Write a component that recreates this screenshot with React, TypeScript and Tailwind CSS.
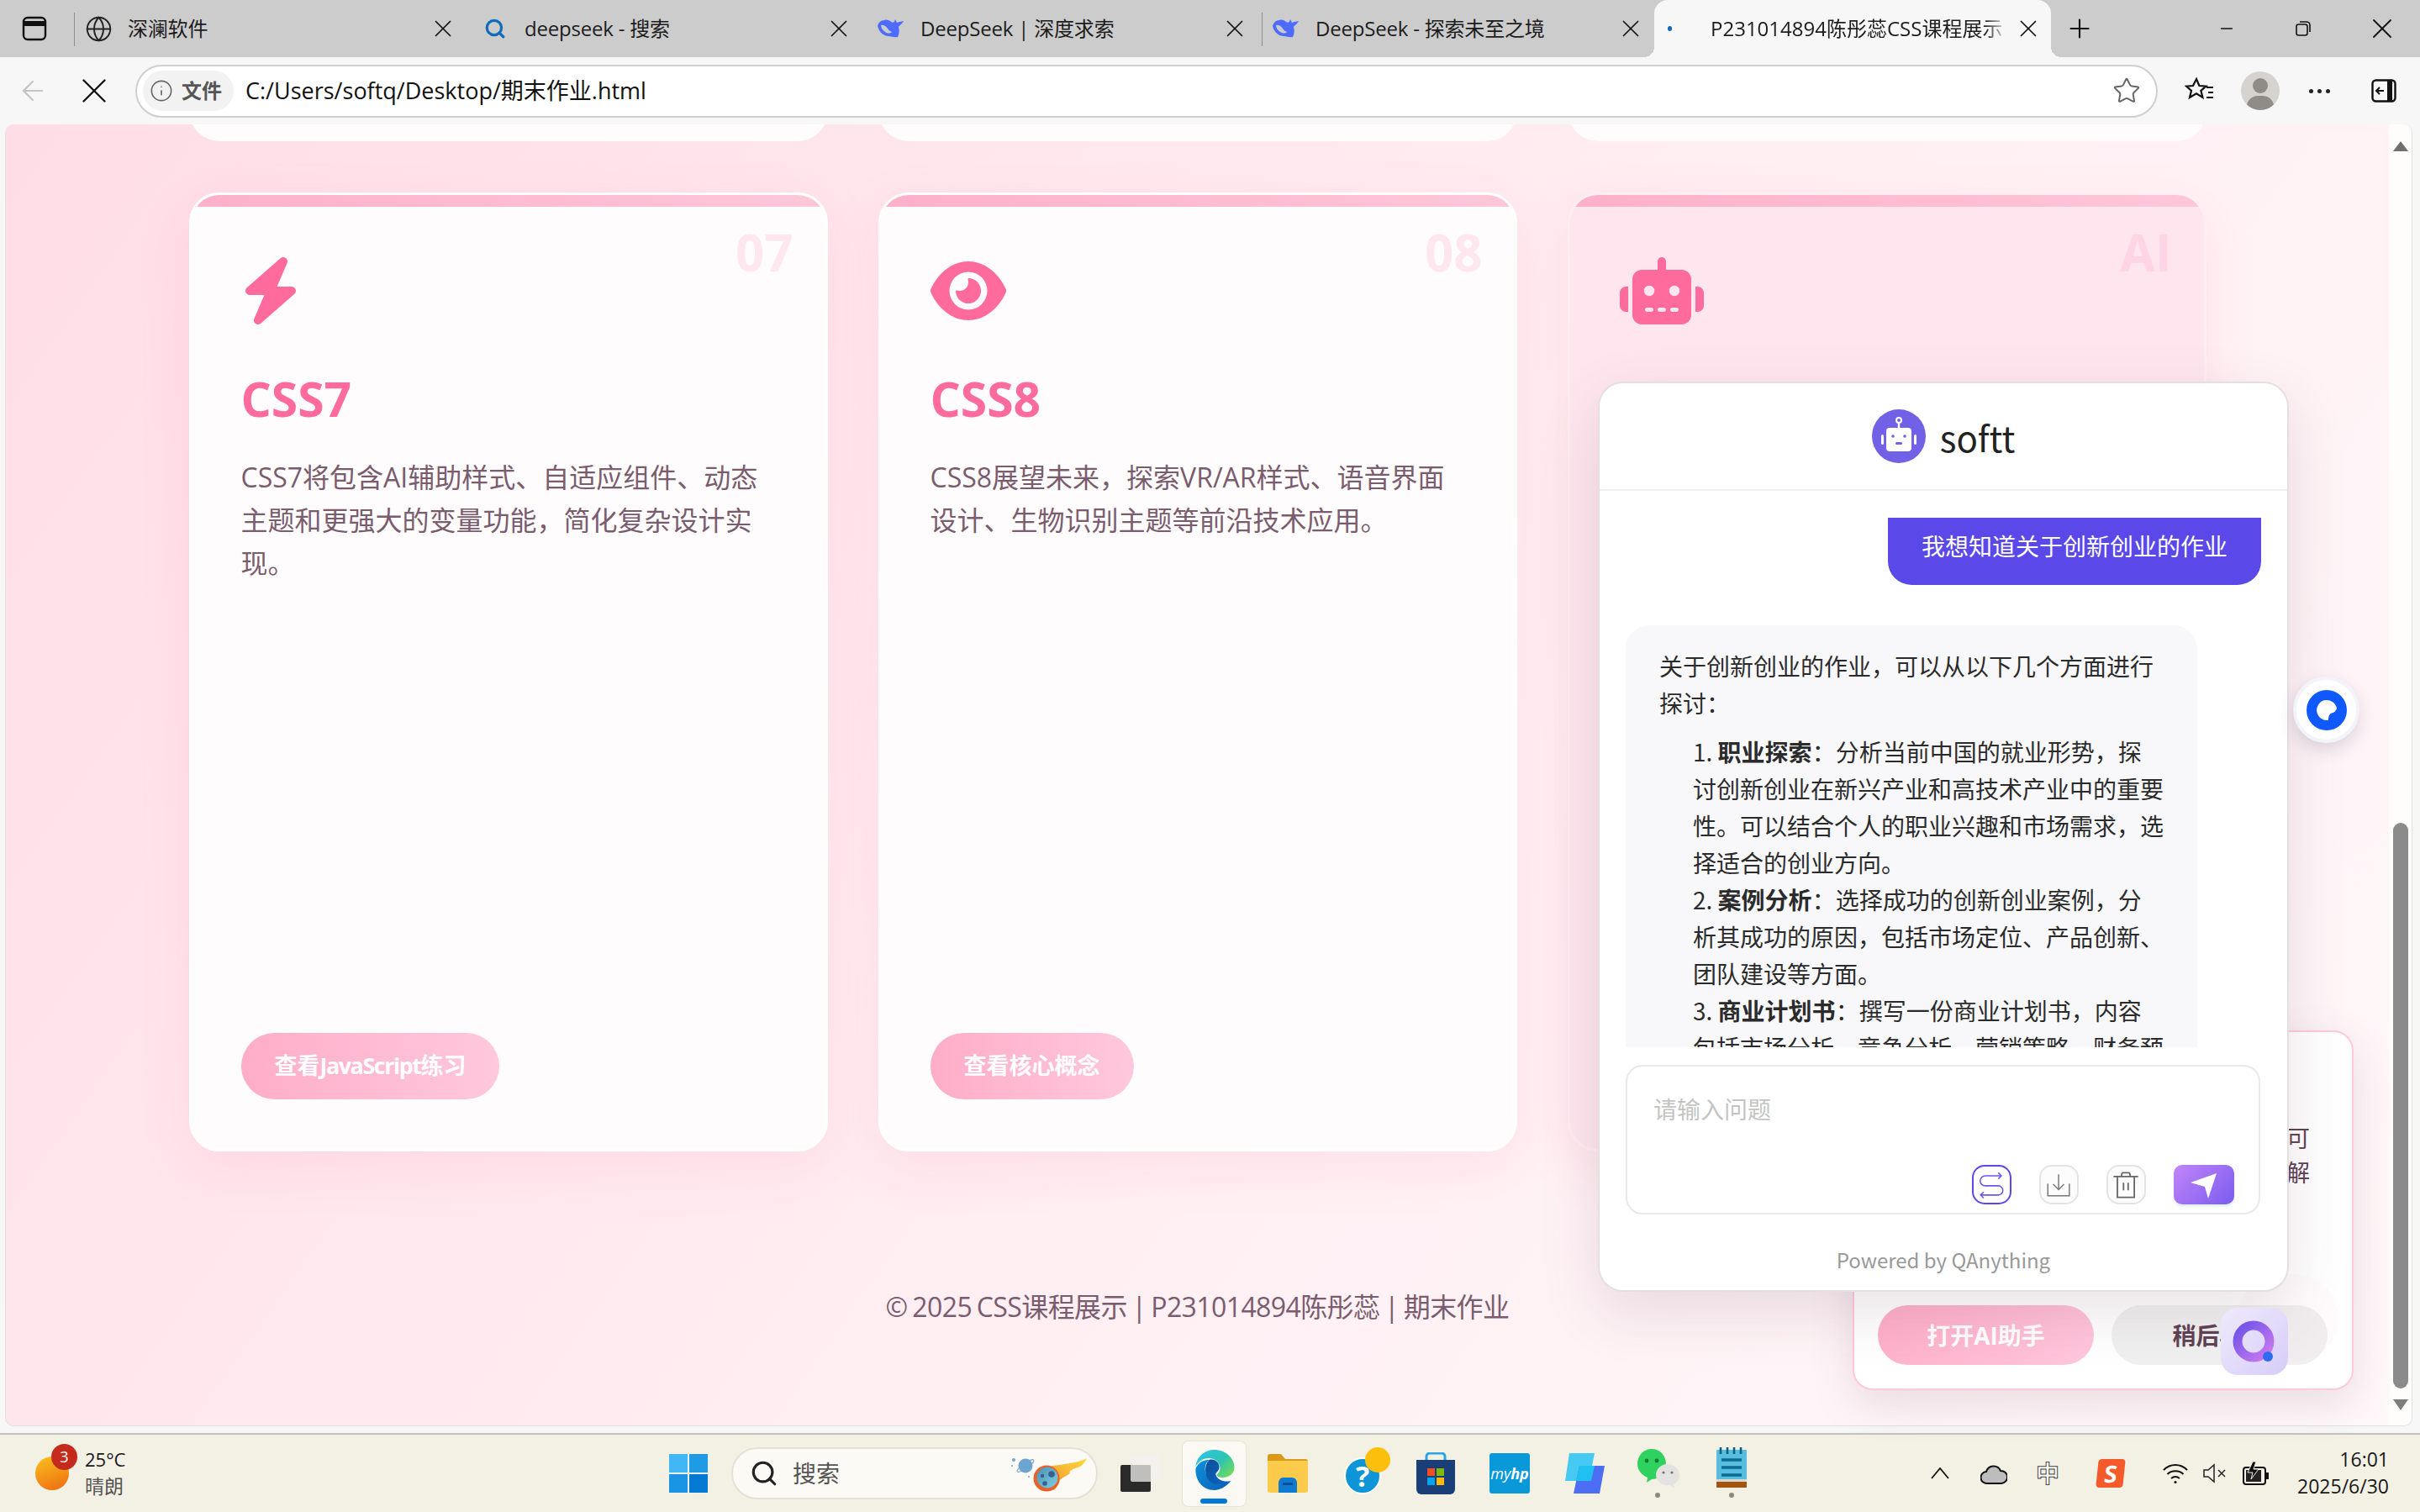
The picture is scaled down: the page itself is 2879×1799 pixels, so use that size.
import { Globe, Search, X, Plus, Minus, ArrowLeft, Star, Info } from "lucide-react";
import { FaBolt, FaEye, FaRobot } from "react-icons/fa6";
import type { ReactNode } from "react";

function Whale() {
  return (
    <svg viewBox="0 0 32 24" className="w-[32px] h-[24px]">
      <path
        fill="#4d6bfe"
        fillRule="evenodd"
        d="M0 9C1 5 4 2 8 2c3-1 6 0 8 2 3 2 4 0 5-3l2 4 3-1 5-1c-2 4-5 5-6 7 1 4 1 8-1 12-4 1-7-1-11-1C8 21 2 17 0 9zM4 8c3-1 6 1 8 4 1 2 3 3 5 4-2 2-5 2-8 0-3-2-5-5-5-8z"
      />
    </svg>
  );
}

function Tab({ icon, title, sep }: { icon: ReactNode; title: string; sep?: boolean }) {
  return (
    <div className={`w-[471px] h-full flex items-center relative ${sep ? "pl-[12px]" : "pl-[13px]"}`}>
      {sep && <span className="absolute left-0 top-[15px] h-[40px] w-px bg-[#8f8f8f]" />}
      <span className="w-[34px] flex justify-center">{icon}</span>
      <span className="ml-[18px] flex-1 text-[24px] text-[#1c1c1c] whitespace-nowrap tracking-[-0.2px]">{title}</span>
      <X className="w-[34px] h-[34px] mr-[15px] text-[#111]" strokeWidth={1.2} />
    </div>
  );
}

function TabBar() {
  return (
    <div className="h-[68px] bg-[#cccccc] flex items-stretch shrink-0">
      <div className="w-[88px] flex items-center pl-[26px]">
        <svg viewBox="0 0 30 30" className="w-[30px] h-[30px]" fill="none" stroke="#111" strokeWidth="2.4">
          <rect x="2" y="2" width="26" height="26" rx="5" />
          <path d="M2 9h26" strokeWidth="6" />
        </svg>
      </div>
      <Tab sep icon={<Globe className="w-[33px] h-[33px] text-[#222]" strokeWidth={1.4} />} title="深澜软件" />
      <Tab icon={<Search className="w-[26px] h-[26px] text-[#0f6cbd]" strokeWidth={3} />} title="deepseek - 搜索" />
      <Tab icon={<Whale />} title="DeepSeek | 深度求索" />
      <Tab sep icon={<Whale />} title="DeepSeek - 探索未至之境" />
      <div className="w-[472px] -ml-[4px] h-full bg-[#f7f7f7] rounded-t-[16px] flex items-center relative">
        <span className="absolute -left-[12px] bottom-0 w-[12px] h-[12px] bg-[radial-gradient(circle_at_0_0,transparent_12px,#f7f7f7_12px)]" />
        <span className="absolute -right-[12px] bottom-0 w-[12px] h-[12px] bg-[radial-gradient(circle_at_100%_0,transparent_12px,#f7f7f7_12px)]" />
        <span className="ml-[16px] w-[5px] h-[6px] rounded-full bg-[#0f6cbd]" />
        <span className="ml-[46px] w-[354px] overflow-hidden text-[24px] text-[#1c1c1c] whitespace-nowrap [mask-image:linear-gradient(90deg,#000_92%,transparent)]">
          P231014894陈彤蕊CSS课程展示 - 期末作业
        </span>
        <X className="w-[34px] h-[34px] ml-[7px] text-[#111]" strokeWidth={1.2} />
      </div>
      <div className="flex items-center ml-[16px]">
        <Plus className="w-[36px] h-[36px] text-[#111]" strokeWidth={1.4} />
        <Minus className="ml-[146px] w-[22px] h-[22px] text-[#111]" strokeWidth={1.6} />
        <svg viewBox="0 0 20 20" className="ml-[70px] w-[20px] h-[20px]" fill="none" stroke="#111" strokeWidth="1.6">
          <rect x="2" y="5" width="13" height="13" rx="2.5" />
          <path d="M6 2h8a4 4 0 0 1 4 4v8" />
        </svg>
        <X className="ml-[64px] w-[40px] h-[40px] text-[#111]" strokeWidth={1.1} />
      </div>
    </div>
  );
}

function Toolbar() {
  return (
    <div className="h-[80px] bg-[#f7f7f7] flex items-center shrink-0">
      <ArrowLeft className="ml-[20px] w-[38px] h-[38px] text-[#c4c4c4]" strokeWidth={1.4} />
      <X className="ml-[29px] w-[50px] h-[50px] text-[#111]" strokeWidth={1.1} />
      <div className="ml-[24px] w-[2406px] h-[63px] rounded-full border-2 border-[#cfcfcf] bg-white flex items-center pl-[7px]">
        <div className="h-[48px] w-[108px] rounded-full bg-[#f2f2f2] flex items-center pl-[8px] gap-[10px]">
          <Info className="w-[28px] h-[28px] text-[#666]" strokeWidth={1.4} />
          <span className="text-[24px] font-bold text-[#555]">文件</span>
        </div>
        <span className="ml-[14px] text-[27px] text-[#111] whitespace-nowrap">C:/Users/softq/Desktop/期末作业.html</span>
        <Star className="ml-auto mr-[18px] w-[34px] h-[34px] text-[#666]" strokeWidth={1.4} />
      </div>
      <svg viewBox="0 0 36 36" className="ml-[32px] w-[36px] h-[36px]" fill="none" stroke="#111" strokeWidth="2.2">
        <path d="M14 4l3.4 8 8 .6-6 5.2 2 8.2-7.4-4.600L6 26l2-8.200-6-5.200 8-.6z" />
        <path d="M26 14h8M28 20h6M26 26h8" />
      </svg>
      <div className="ml-[31px] w-[46px] h-[46px] rounded-full bg-[#d4d3cf] relative overflow-hidden">
        <span className="absolute left-[14px] top-[8px] w-[18px] h-[18px] rounded-full bg-[#8f8c88]" />
        <span className="absolute left-[7px] top-[29px] w-[32px] h-[26px] rounded-full bg-[#8f8c88]" />
      </div>
      <div className="ml-[35px] flex gap-[5px]">
        <span className="w-[5px] h-[5px] rounded-full bg-[#222]" />
        <span className="w-[5px] h-[5px] rounded-full bg-[#222]" />
        <span className="w-[5px] h-[5px] rounded-full bg-[#222]" />
      </div>
      <svg viewBox="0 0 30 28" className="ml-[49px] w-[30px] h-[28px]" fill="none" stroke="#111" strokeWidth="2.4">
        <rect x="1.500" y="1.500" width="27" height="25" rx="4" />
        <path d="M22 1.500v25" strokeWidth="6" />
        <path d="M15 14H7M10 10l-4 4 4 4" strokeWidth="2" />
      </svg>
    </div>
  );
}

function Card({ no, icon, title, desc, action, tint }: { no: string; icon: ReactNode; title: string; desc: string; action: ReactNode; tint?: boolean }) {
  return (
    <div
      className={`relative h-[1141px] rounded-[36px] border-[3px] pt-[74px] pl-[59px] pr-[60px] pb-[59px] flex flex-col overflow-hidden shadow-[0_20px_60px_rgba(255,130,170,0.14)] ${
        tint ? "bg-[#ffe6ee] border-[#ffeef3]" : "bg-[#fffcfd] border-white"
      }`}
    >
      <div className="absolute inset-x-0 top-0 h-[14px] bg-[linear-gradient(90deg,#ffb0cb,#ffc6da)]" />
      <span className={`absolute right-[38px] top-[28px] text-[60px] leading-[80px] font-bold ${tint ? "text-[#ffd4e4]" : "text-[#ffe6ef]"}`}>{no}</span>
      <div className="h-[80px] text-[#ff6b9d]">{icon}</div>
      <h3 className={`text-[57px] leading-[72px] font-bold text-[#ff6b9d] ${tint ? "mt-[59px]" : "mt-[52px]"}`}>{title}</h3>
      <p className="mt-[32px] text-[32px] leading-[51px] text-[#7a5c6e]">{desc}</p>
      <button className="mt-auto self-start h-[79px] px-[40px] rounded-full bg-[linear-gradient(90deg,#ffadc8,#ffc8dd)] text-[27px] font-bold text-white whitespace-nowrap">
        {action}
      </button>
    </div>
  );
}

function Scrollbar() {
  return (
    <div className="w-[27px] bg-[#fffcfc] flex flex-col items-center shrink-0">
      <span className="mt-[20px] w-0 h-0 border-x-[9px] border-x-transparent border-b-[12px] border-b-[#6f6f6f]" />
      <div className="mt-[799px] w-[18px] h-[673px] rounded-full bg-[#8b8b8b]" />
      <span className="mt-[13px] w-0 h-0 border-x-[9px] border-x-transparent border-t-[13px] border-t-[#7d7d7d]" />
    </div>
  );
}

function TopRowCard() {
  return (
    <div className="h-[20px] overflow-hidden">
      <div className="h-[60px] -mt-[40px] bg-[#fffcfd] rounded-b-[36px]" />
    </div>
  );
}

function Page() {
  return (
    <div className="flex-1 min-h-0 bg-[#f7f7f7] pl-[6px] pr-[9px] pb-[8px]">
      <div className="h-full flex rounded-[10px] overflow-hidden border border-[#e4dfe1] border-t-0">
        <div className="flex-1 min-w-0 bg-[linear-gradient(125deg,#ffdde6_0%,#ffe7ed_32%,#fff0f4_60%,#fff8fa_100%)]">
          <div className="w-[2400px] mx-auto">
            <div className="grid grid-cols-3 gap-[60px]">
              <TopRowCard />
              <TopRowCard />
              <TopRowCard />
            </div>
            <div className="mt-[61px] grid grid-cols-3 gap-[60px]">
              <Card
                no="07"
                icon={<FaBolt className="w-[70px] h-[80px]" />}
                title="CSS7"
                desc="CSS7将包含AI辅助样式、自适应组件、动态主题和更强大的变量功能，简化复杂设计实现。"
                action={
                  <>
                    查看<span className="tracking-[-1.5px]">JavaScript</span>练习
                  </>
                }
              />
              <Card
                no="08"
                icon={<FaEye className="w-[90px] h-[80px]" />}
                title="CSS8"
                desc="CSS8展望未来，探索VR/AR样式、语音界面设计、生物识别主题等前沿技术应用。"
                action="查看核心概念"
              />
              <Card tint no="AI" icon={<FaRobot className="w-[100px] h-[80px]" />} title="AI助手" desc="" action="打开AI助手" />
            </div>
            <p className="mt-[160px] text-center text-[32px] leading-[50px] text-[#7a5c6e] tracking-[-0.6px] [word-spacing:-2px]">
              © 2025 CSS课程展示 | P231014894陈彤蕊 | 期末作业
            </p>
          </div>
        </div>
        <Scrollbar />
      </div>
    </div>
  );
}

function BotAvatar() {
  return (
    <svg viewBox="0 0 64 64" className="w-[64px] h-[64px]">
      <circle cx="32" cy="32" r="32" fill="#7161e6" />
      <rect x="17" y="22" width="30" height="28" rx="4" fill="#fff" />
      <rect x="11" y="30" width="3" height="12" rx="1.500" fill="#fff" />
      <rect x="50" y="30" width="3" height="12" rx="1.500" fill="#fff" />
      <path d="M32 22v-6" stroke="#fff" strokeWidth="2.4" />
      <circle cx="32" cy="13" r="3" fill="none" stroke="#fff" strokeWidth="2" />
      <circle cx="25" cy="32" r="1.800" fill="#7161e6" />
      <circle cx="39" cy="32" r="1.800" fill="#7161e6" />
      <rect x="28" y="39" width="8" height="3" rx="1.500" fill="#7161e6" />
    </svg>
  );
}

function ChatPanel() {
  return (
    <div className="absolute left-[1901px] top-[454px] w-[822px] h-[1083px] rounded-[30px] border-2 border-[#e6dfe2] bg-white flex flex-col font-['Noto_Sans_CJK_SC',sans-serif] shadow-[0_24px_70px_rgba(90,60,80,0.14)]">
      <div className="h-[128px] shrink-0 border-b-2 border-[#eeeeee] flex items-center justify-center gap-[17px]">
        <BotAvatar />
        <span className="text-[42px] text-[#222]">softt</span>
      </div>
      <div className="h-[662px] shrink-0 overflow-hidden pl-[31px] pr-[31px] pt-[32px]">
        <div className="flex justify-end">
          <div className="w-[444px] h-[80px] rounded-b-[28px] bg-[#5b48e8] text-white text-[28px] leading-[44px] px-[40px] pt-[11px] whitespace-nowrap">
            我想知道关于创新创业的作业
          </div>
        </div>
        <div className="mt-[48px] w-[680px] rounded-t-[28px] bg-[#f8f8fb] px-[40px] pt-[26px] pb-[30px] text-[28px] leading-[44px] text-[#2b2b2b]">
          <p>关于创新创业的作业，可以从以下几个方面进行探讨：</p>
          <ol className="mt-[14px] pl-[40px] list-decimal list-inside">
            <li>
              <b>职业探索</b>：分析当前中国的就业形势，探讨创新创业在新兴产业和高技术产业中的重要性。可以结合个人的职业兴趣和市场需求，选择适合的创业方向。
            </li>
            <li>
              <b>案例分析</b>：选择成功的创新创业案例，分析其成功的原因，包括市场定位、产品创新、团队建设等方面。
            </li>
            <li>
              <b>商业计划书</b>：撰写一份商业计划书，内容包括市场分析、竞争分析、营销策略、财务预测等方面。
            </li>
          </ol>
        </div>
      </div>
      <div className="ml-[31px] mt-[21px] w-[755px] h-[178px] shrink-0 rounded-[20px] border-2 border-[#e9e9ec] flex flex-col">
        <textarea
          placeholder="请输入问题"
          className="flex-1 resize-none outline-none bg-transparent pl-[31px] pt-[28px] text-[28px] leading-[44px] placeholder:text-[#c4c4c4]"
        />
        <div className="flex justify-end gap-[33px] pr-[29px] pb-[10px]">
          <button className="w-[47px] h-[47px] rounded-[15px] border-2 border-[#5b48e8] overflow-hidden">
            <svg viewBox="0 0 47 47" className="w-full h-full" fill="none" stroke="#6a58e8" strokeWidth="1.700">
              <path d="M36 12H15a6.500 6.500 0 0 0 0 13h17a6 6 0 0 1 0 12H9" />
              <path d="M32 8l4 4-4 4M13 33l-4 4 4 4" />
            </svg>
          </button>
          <button className="w-[47px] h-[47px] rounded-[15px] border-2 border-[#e4e4e4] bg-[#fcfcfc] overflow-hidden">
            <svg viewBox="0 0 47 47" className="w-full h-full" fill="none" stroke="#777" strokeWidth="1.600">
              <path d="M9 22v16h28V22M23 10v20M16 23l7 7 7-7" />
            </svg>
          </button>
          <button className="w-[47px] h-[47px] rounded-[15px] border-2 border-[#e4e4e4] bg-[#fcfcfc] overflow-hidden">
            <svg viewBox="0 0 47 47" className="w-full h-full" fill="none" stroke="#666" strokeWidth="2">
              <path d="M7 13h32M12 13v27h22V13M17 13l1-4a1 1 0 0 1 1-1h8a1 1 0 0 1 1 1l1 4M20 21v10M26 21v10" />
            </svg>
          </button>
          <button className="w-[72px] h-[47px] rounded-[10px] bg-[linear-gradient(135deg,#c285f8,#7a5cf0)] shadow-[0_3px_0_#e6f4fd]">
            <svg viewBox="0 0 72 47" className="w-full h-full">
              <polygon fill="#fff" points="20,21 51,10 41,40 37,26" />
            </svg>
          </button>
        </div>
      </div>
      <p className="mt-[36px] text-center text-[24px] leading-[36px] text-[#999]">Powered by QAnything</p>
    </div>
  );
}

function Reminder() {
  return (
    <>
      <div className="absolute left-[2204px] top-[1226px] w-[596px] h-[428px] rounded-[24px] border-2 border-[#ffc8dd] bg-white shadow-[0_16px_50px_rgba(120,80,100,0.16)] flex flex-col">
        <p className="mt-[106px] mr-[50px] text-right text-[28px] leading-[41px] text-[#5f4254]">
          可
          <br />解
        </p>
        <div className="mt-[137px] px-[28px] flex gap-[21px]">
          <button className="w-[257px] h-[71px] rounded-full bg-[linear-gradient(135deg,#ffadc8,#ffc8dd)] text-[28px] font-bold text-white">
            打开AI助手
          </button>
          <button className="w-[257px] h-[71px] rounded-full bg-[#f0f0f0] text-[28px] font-bold text-[#5f4254]">稍后再说</button>
        </div>
      </div>
      <div className="absolute left-[2662px] top-[1516px] w-[120px] h-[104px] rounded-full bg-[#ffdbe6]/10" />
    </>
  );
}

function FloatBadges() {
  return (
    <>
      <div className="absolute left-[2728px] top-[805px] w-[79px] h-[79px] rounded-full bg-white border-[4px] border-[#f2f3fb] shadow-[0_8px_20px_rgba(60,60,90,0.18)] flex items-center justify-center">
        <svg viewBox="0 0 48 48" className="w-[48px] h-[48px]">
          <circle cx="24" cy="24" r="24" fill="#1058ff" />
          <path fill="#fff" d="M36 22A12 12 0 1 0 26 35.800C26 30 28 28 30 27.500 33 27 35 25 36 22z" />
        </svg>
      </div>
      <div className="absolute left-[2642px] top-[1556px] w-[80px] h-[80px] rounded-[20px] bg-[linear-gradient(135deg,#efeafc,#d6cdf8)] flex items-center justify-center">
        <svg viewBox="0 0 60 60" className="w-[60px] h-[60px]">
          <defs>
            <linearGradient id="qring" x1="0" y1="0" x2="1" y2="1">
              <stop offset="0" stopColor="#6d52e8" />
              <stop offset="1" stopColor="#cc7bf0" />
            </linearGradient>
          </defs>
          <circle cx="29" cy="30" r="19" fill="none" stroke="url(#qring)" strokeWidth="11" />
          <circle cx="46" cy="48" r="6" fill="#2f6bf0" />
        </svg>
      </div>
    </>
  );
}

function Comet() {
  return (
    <svg viewBox="0 0 92 48" className="ml-auto mr-[9px] w-[92px] h-[48px]">
      <defs>
        <linearGradient id="flame" x1="1" y1="0" x2="0" y2="1">
          <stop offset="0" stopColor="#fcdc3c" />
          <stop offset="1" stopColor="#f5892a" />
        </linearGradient>
        <linearGradient id="rock" x1="0" y1="0" x2="1" y2="1">
          <stop offset="0" stopColor="#4c8fb5" />
          <stop offset="1" stopColor="#7ed2e0" />
        </linearGradient>
      </defs>
      <circle cx="17" cy="15" r="8.500" fill="#6da5d2" />
      <ellipse cx="17" cy="15" rx="12" ry="3" fill="none" stroke="#6da5d2" strokeWidth="1" transform="rotate(-35 17 15)" />
      <circle cx="3" cy="8" r="2" fill="#6da5d2" />
      <circle cx="1" cy="15" r="1" fill="#6da5d2" />
      <circle cx="21" cy="28" r="1" fill="#6da5d2" />
      <path d="M34 18C50 14 58 14 70 12 78 11 84 9 90 6 86 14 82 17 76 18 72 20 68 21 70 24 66 27 62 28 58 32 56 38 54 42 50 44z" fill="url(#flame)" />
      <circle cx="42" cy="30" r="15.500" fill="#e8602c" />
      <circle cx="43" cy="29" r="12.500" fill="url(#rock)" />
      <circle cx="48" cy="25" r="3.800" fill="#35608f" />
      <circle cx="37" cy="27" r="2.200" fill="#35608f" />
      <circle cx="40" cy="36" r="2.800" fill="#35608f" />
    </svg>
  );
}

function Edge() {
  return (
    <svg viewBox="0 0 48 48" className="w-[49px] h-[48px]">
      <defs>
        <linearGradient id="edgeb" x1="0" y1="0" x2="1" y2="1">
          <stop offset="0" stopColor="#0e92dc" />
          <stop offset="1" stopColor="#0a5fb4" />
        </linearGradient>
        <linearGradient id="edged" x1="0" y1="0" x2="1" y2="1">
          <stop offset="0" stopColor="#0a4f9c" />
          <stop offset="1" stopColor="#0d68c0" />
        </linearGradient>
        <linearGradient id="edgeg" x1="0" y1="0" x2="1" y2="0.800">
          <stop offset="0" stopColor="#2ec4ee" />
          <stop offset="0.600" stopColor="#2fc4b0" />
          <stop offset="1" stopColor="#6fdc5c" />
        </linearGradient>
      </defs>
      <path d="M2 22C6 14 12 12 18 12 14 15 12 21 14 28 17 38 28 44 44 37 38 44 31 48 24 48 10 48 1 36 2 22z" fill="url(#edgeb)" />
      <path d="M18 12C12 18 12 30 18 37 24 43 36 42 44 37 36 39 28 36 26 30 25 27 29 26 30 22 31 15 24 10 18 12z" fill="url(#edged)" />
      <path d="M2 20C3 8 13 0 24 0 38 0 48 10 48 21 48 29 41 33 34 33 29 33 27 31 27 30 27 29 31 27 31 22 31 15 25 10 18 10 10 10 4 15 2 20z" fill="url(#edgeg)" />
    </svg>
  );
}

function Taskbar() {
  return (
    <div className="h-[94px] shrink-0 bg-[#f3f0e4] border-t-2 border-[#c4c3b8] flex items-center text-[#1a1a1a]">
      <div className="ml-[42px] w-[40px] h-[40px] rounded-full bg-[linear-gradient(160deg,#f7c21e,#f06a10)] relative">
        <span className="absolute left-[19px] -top-[15px] w-[31px] h-[31px] rounded-full bg-[#c42b1c] text-white text-[18px] leading-[31px] text-center">3</span>
      </div>
      <div className="ml-[19px] -mt-[3px] w-[60px] text-[22px] leading-[32px]">
        <div>25°C</div>
        <div className="text-[#555] text-[23px]">晴朗</div>
      </div>
      {/* windows logo */}
      <svg viewBox="0 0 46 46" className="ml-[635px] w-[46px] h-[46px]">
        <rect width="22" height="22" fill="#41b8f5" />
        <rect x="24" width="22" height="22" fill="#1f9be6" />
        <rect y="24" width="22" height="22" fill="#1a94e4" />
        <rect x="24" y="24" width="22" height="22" fill="#0479d3" />
      </svg>
      <div className="ml-[28px] w-[436px] h-[62px] rounded-full bg-[#fbfaf5] border-2 border-[#e4e2d6] flex items-center pl-[20px]">
        <Search className="w-[34px] h-[34px] text-[#222]" strokeWidth={2.2} />
        <span className="ml-[17px] text-[28px] text-[#555]">搜索</span>
        <Comet />
      </div>
      {/* task view */}
      <svg viewBox="0 0 48 44" className="ml-[27px] w-[48px] h-[44px]">
        <rect x="0" y="12" width="36" height="32" rx="2" fill="#2a2a2a" />
        <rect x="12" y="0" width="36" height="32" rx="2" fill="#f2f2f0" opacity="0.75" />
      </svg>
      {/* edge, active */}
      <div className="ml-[25px] w-[77px] h-[79px] rounded-[8px] bg-[#faf9f4] border border-[#e6e4da] flex items-center justify-center relative pb-[8px]">
        <Edge />
        <span className="absolute bottom-[3px] left-[21px] w-[32px] h-[6px] rounded-full bg-[#0078d4]" />
      </div>
      {/* explorer */}
      <svg viewBox="0 0 48 46" className="ml-[25px] w-[48px] h-[46px]">
        <path d="M0 3a3 3 0 0 1 3-3h13l5 6h24a3 3 0 0 1 3 3v6H0z" fill="#d99a1a" />
        <path d="M0 8h48v35a3 3 0 0 1-3 3H3a3 3 0 0 1-3-3z" fill="#fdcb4c" />
        <path d="M13 46V34a6 6 0 0 1 6-6h10a6 6 0 0 1 6 6v12z" fill="#0e7bd1" />
        <rect x="18" y="34" width="12" height="3" fill="#0a4f90" />
      </svg>
      {/* help */}
      <div className="ml-[43px] w-[55px] h-[50px] relative">
        <div className="absolute left-0 top-[6px] w-[44px] h-[44px] rounded-full bg-[#0e95d8] border-2 border-white text-white text-[34px] leading-[40px] font-bold text-center">?</div>
        <span className="absolute right-0 -top-[6px] w-[30px] h-[30px] rounded-full bg-[#fcc00c]" />
      </div>
      {/* store */}
      <svg viewBox="0 0 46 50" className="ml-[31px] w-[46px] h-[50px]">
        <path d="M12 10V5a4 4 0 0 1 4-4h14a4 4 0 0 1 4 4v5" fill="none" stroke="#29a4e8" strokeWidth="3" />
        <path d="M0 9h46v35a6 6 0 0 1-6 6H6a6 6 0 0 1-6-6z" fill="#1a3f78" />
        <rect x="13" y="19" width="9" height="9" fill="#f25022" />
        <rect x="24" y="19" width="9" height="9" fill="#7fba00" />
        <rect x="13" y="30" width="9" height="9" fill="#00a4ef" />
        <rect x="24" y="30" width="9" height="9" fill="#ffb900" />
      </svg>
      {/* myhp */}
      <div className="ml-[41px] w-[48px] h-[48px] rounded-[3px] bg-[#0a99d8] flex items-center justify-center text-white text-[18px] italic whitespace-nowrap">
        my<b>hp</b>
      </div>
      {/* blue app */}
      <svg viewBox="0 0 50 48" className="ml-[39px] w-[50px] h-[48px]">
        <path d="M8 0h30l-6 30a3 3 0 0 1-3 3H3z" fill="#46c9f3" />
        <path d="M20 15h30l-6 33H13z" fill="#4c6ef5" />
        <path d="M20 15h18l-4 18H16z" fill="#20c0f0" />
      </svg>
      {/* wechat */}
      <div className="ml-[39px] w-[50px] h-[62px] relative">
        <svg viewBox="0 0 50 46" className="w-[50px] h-[46px] mt-[2px]">
          <path d="M17 0c10 0 17 8 17 18S27 36 17 36l-6 4 1-6C5 31 0 25 0 18 0 8 7 0 17 0z" fill="#2fd15f" />
          <circle cx="11" cy="14" r="2.400" fill="#127a36" />
          <circle cx="23" cy="14" r="2.400" fill="#127a36" />
          <path d="M36 18c8 0 14 6 14 13 0 5-3 9-7 11l1 4-6-3C30 44 22 39 22 31c0-7 6-13 14-13z" fill="#e3e3e1" />
          <circle cx="31" cy="28" r="1.600" fill="#777" />
          <circle cx="41" cy="28" r="1.600" fill="#777" />
        </svg>
        <span className="absolute left-[21px] bottom-[2px] w-[6px] h-[6px] rounded-full bg-[#8a8a80]" />
      </div>
      {/* notepad */}
      <div className="ml-[44px] w-[36px] h-[62px] relative">
        <svg viewBox="0 0 36 48" className="w-[36px] h-[48px]">
          <rect y="3" width="36" height="45" fill="#57bedd" />
          <rect y="41" width="36" height="7" fill="#a3540e" />
          <rect y="38" width="36" height="3" fill="#d9d9d2" />
          <path d="M5 0v8M13 0v8M21 0v8M29 0v8" stroke="#0d5f86" strokeWidth="2.600" />
          <path d="M6 15h24M6 24h24M6 33h24" stroke="#0d6a95" strokeWidth="3.400" />
        </svg>
        <span className="absolute left-[15px] bottom-[2px] w-[6px] h-[6px] rounded-full bg-[#8a8a80]" />
      </div>
      {/* tray */}
      <svg viewBox="0 0 22 14" className="ml-[219px] w-[22px] h-[14px]" fill="none" stroke="#111" strokeWidth="1.800">
        <path d="M1 13L11 1l10 12" />
      </svg>
      <svg viewBox="0 0 32 26" className="ml-[37px] w-[32px] h-[26px]">
        <path d="M8 25a7 7 0 0 1-1-14 9 9 0 0 1 17-1 7.500 7.500 0 0 1 1 15z" fill="#bdbdbd" stroke="#111" strokeWidth="2" />
      </svg>
      <span className="ml-[34px] w-[28px] text-[28px] font-bold text-white text-center [-webkit-text-stroke:1px_#444]">中</span>
      <div className="ml-[45px] w-[32px] h-[34px] -skew-x-6 rounded-[4px] bg-[#f45a2a] text-white text-[28px] leading-[34px] font-bold text-center">S</div>
      <svg viewBox="0 0 30 26" className="ml-[46px] w-[30px] h-[26px]" fill="none" stroke="#111" strokeWidth="2">
        <path d="M1 9c8-8 20-8 28 0M5.500 14c5-5 14-5 19 0M10 19c3-2.500 7-2.500 10 0" />
        <circle cx="15" cy="23.500" r="1.600" fill="#111" stroke="none" />
      </svg>
      <svg viewBox="0 0 28 26" className="ml-[18px] w-[28px] h-[26px]" fill="none" stroke="#222" strokeWidth="1.500">
        <path d="M1 9v8h5l7 6V3L6 9z" />
        <path d="M18 9l8 8M26 9l-8 8" />
      </svg>
      <svg viewBox="0 0 32 28" className="ml-[19px] w-[32px] h-[28px]">
        <rect x="1" y="7" width="26" height="20" rx="3" fill="none" stroke="#111" strokeWidth="2" />
        <rect x="4" y="10" width="18" height="14" fill="#222" />
        <rect x="28" y="13" width="3" height="8" fill="#111" />
        <path d="M12 0L6 13h6l-2 8 9-12h-6l3-9z" fill="#111" stroke="#f3f0e4" strokeWidth="1" />
      </svg>
      <div className="ml-auto mr-[37px] -mt-[3px] text-[23px] leading-[32px] text-right">
        <div>16:01</div>
        <div>2025/6/30</div>
      </div>
    </div>
  );
}

export default function App() {
  return (
    <div className="relative w-[2879px] h-[1799px] overflow-hidden flex flex-col font-['Open_Sans','Noto_Sans_CJK_SC',sans-serif]">
      <TabBar />
      <Toolbar />
      <Page />
      <Taskbar />
      <Reminder />
      <ChatPanel />
      <FloatBadges />
    </div>
  );
}
